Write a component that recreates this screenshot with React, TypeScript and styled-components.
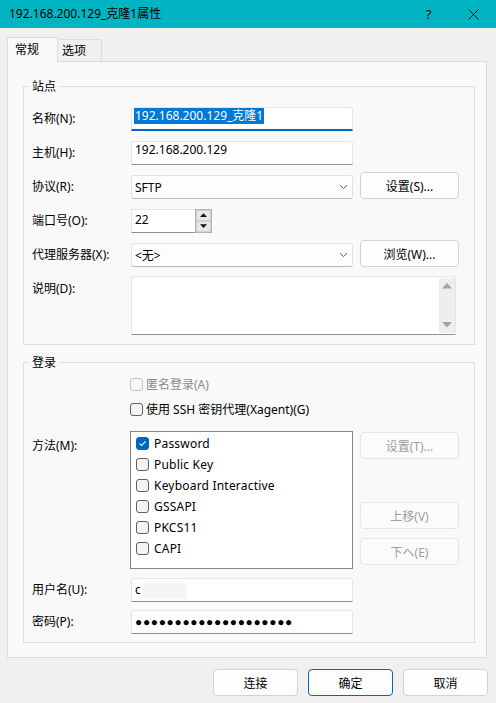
import React from 'react'
import styled, { createGlobalStyle } from 'styled-components'

const GlobalStyle = createGlobalStyle`
  html, body {
    margin: 0;
    padding: 0;
  }
  body {
    background: #f0f0f0;
    font-family: "Noto Sans", "Noto Sans CJK SC", sans-serif;
    font-size: 12px;
    color: #000;
  }
`

const methods: [string, boolean][] = [
  ['Password', true],
  ['Public Key', false],
  ['Keyboard Interactive', false],
  ['GSSAPI', false],
  ['PKCS11', false],
  ['CAPI', false],
]

function Chevron() {
  return (
    <svg width="9" height="6" viewBox="0 0 9 6">
      <path d="M1 1.2 L4.5 4.6 L8 1.2" fill="none" stroke="#5c5c5c" strokeWidth="1" />
    </svg>
  )
}

function Triangle({ down, color, size }: { down?: boolean, color: string, size: number }) {
  return (
    <svg width={size} height={size / 2 + 1} viewBox="0 0 10 6">
      {down
        ? <polygon points="0,0 10,0 5,5.5" fill={color} />
        : <polygon points="0,5.5 10,5.5 5,0" fill={color} />}
    </svg>
  )
}

function CheckBox({ checked, disabled }: { checked?: boolean, disabled?: boolean }) {
  return (
    <Box $checked={checked} $disabled={disabled}>
      {checked && (
        <svg width="11" height="11" viewBox="0 0 11 11">
          <path d="M2.6 5.6 L4.6 7.5 L8.4 3.4" fill="none" stroke="#fff" strokeWidth="1.1" />
        </svg>
      )}
    </Box>
  )
}

export default function App() {
  return (
    <>
      <GlobalStyle />
      <Window>
        <TitleBar>
          <Title>192.168.200.129_克隆1属性</Title>
          <CaptionButton>?</CaptionButton>
          <CaptionButton>
            <svg width="11" height="11" viewBox="0 0 11 11">
              <path d="M0.5 0.5 L10.5 10.5 M10.5 0.5 L0.5 10.5" stroke="#111" strokeWidth="1" />
            </svg>
          </CaptionButton>
        </TitleBar>

        <Content>
          <TabStrip>
            <Tab $active>常规</Tab>
            <Tab>选项</Tab>
          </TabStrip>

          <Panel>
            <Group $pt={17} $pb={9}>
              <Legend>站点</Legend>
              <Row $h={27}>
                <Label>名称(N):</Label>
                <Field $active $raise><Selected>192.168.200.129_克隆1</Selected></Field>
              </Row>
              <Row $h={27} $mt={7}>
                <Label>主机(H):</Label>
                <Field $raise>192.168.200.129</Field>
              </Row>
              <Row $h={27} $mt={7}>
                <Label>协议(R):</Label>
                <Select>SFTP<Chevron /></Select>
                <Button>设置(S)...</Button>
              </Row>
              <Row $h={27} $mt={7}>
                <Label>端口号(O):</Label>
                <Spin>
                  <SpinField>22</SpinField>
                  <SpinButtons>
                    <SpinButton><Triangle color="#111" size={7} /></SpinButton>
                    <SpinButton><Triangle down color="#111" size={7} /></SpinButton>
                  </SpinButtons>
                </Spin>
              </Row>
              <Row $h={27} $mt={7}>
                <Label>代理服务器(X):</Label>
                <Select>&lt;无&gt;<Chevron /></Select>
                <Button>浏览(W)...</Button>
              </Row>
              <Row $h={61} $mt={7} $align="start">
                <Label $pt={3}>说明(D):</Label>
                <TextArea>
                  <TextAreaBody />
                  <ScrollBar>
                    <Triangle color="#a3a3a3" size={10} />
                    <Triangle down color="#a3a3a3" size={10} />
                  </ScrollBar>
                </TextArea>
              </Row>
            </Group>

            <Group $mt={17} $pt={13} $pb={8}>
              <Legend>登录</Legend>
              <Row $h={17} $align="center">
                <CheckRow $disabled>
                  <CheckBox disabled />
                  匿名登录(A)
                </CheckRow>
              </Row>
              <Row $h={17} $mt={8} $align="center">
                <CheckRow>
                  <CheckBox />
                  使用 SSH 密钥代理(Xagent)(G)
                </CheckRow>
              </Row>
              <Row $h={138} $mt={13} $align="start">
                <Label $pt={3}>方法(M):</Label>
                <ListBox>
                  {methods.map(([name, checked]) => (
                    <ListItem key={name}>
                      <CheckBox checked={checked} />
                      {name}
                    </ListItem>
                  ))}
                </ListBox>
                <ButtonStack>
                  <Button disabled>设置(T)...</Button>
                  <Button disabled $mt={43}>上移(V)</Button>
                  <Button disabled $mt={9}>下へ(E)</Button>
                </ButtonStack>
              </Row>
              <Row $h={24} $mt={9}>
                <Label>用户名(U):</Label>
                <Field>c<Redacted /></Field>
              </Row>
              <Row $h={24} $mt={8}>
                <Label>密码(P):</Label>
                <Field><Dots>{'●'.repeat(20)}</Dots></Field>
              </Row>
            </Group>
          </Panel>

          <Footer>
            <DialogButton>连接</DialogButton>
            <DialogButton $default>确定</DialogButton>
            <DialogButton>取消</DialogButton>
          </Footer>
        </Content>
      </Window>
    </>
  )
}

const Window = styled.div`
  width: 496px;
  height: 703px;
  overflow: hidden;
  display: flex;
  flex-direction: column;
`

const TitleBar = styled.div`
  height: 28px;
  flex: none;
  display: flex;
  align-items: center;
  background: #00b4c4;
`

const Title = styled.div`
  flex: 1;
  padding-left: 9px;
  line-height: 28px;
`

const CaptionButton = styled.div`
  width: 45px;
  height: 28px;
  display: flex;
  align-items: center;
  justify-content: center;
  font-size: 13px;
`

const Content = styled.div`
  padding: 0 9px 0 7px;
`

const TabStrip = styled.div`
  margin-top: 9px;
  height: 24px;
  display: flex;
  align-items: flex-end;
`

const Tab = styled.div<{ $active?: boolean }>`
  box-sizing: border-box;
  position: relative;
  border: 1px solid #dcdcdc;
  border-bottom: none;
  ${({ $active }) => $active ? `
    z-index: 1;
    width: 51px;
    height: 25px;
    margin-bottom: -1px;
    padding-left: 7px;
    line-height: 23px;
    background: #f9f9f9;
  ` : `
    width: 44px;
    height: 22px;
    border-left: none;
    padding-left: 4px;
    line-height: 22px;
    background: #f0f0f0;
  `}
`

const Panel = styled.div`
  box-sizing: border-box;
  height: 597px;
  border: 1px solid #dcdcdc;
  background: #f9f9f9;
  padding: 24px 11px 0 15px;
`

const Group = styled.div<{ $mt?: number, $pt: number, $pb: number }>`
  position: relative;
  border: 1px solid #dcdcdc;
  margin-top: ${({ $mt }) => $mt ?? 0}px;
  padding: ${({ $pt }) => $pt}px 8px ${({ $pb }) => $pb}px;
`

const Legend = styled.div`
  position: absolute;
  top: -9px;
  left: 5px;
  padding: 0 3px;
  line-height: 17px;
  background: #f9f9f9;
`

const Row = styled.div<{ $h: number, $mt?: number, $align?: string }>`
  display: grid;
  grid-template-columns: 92px 222px 99px;
  column-gap: 7px;
  align-items: ${({ $align }) => $align ?? 'end'};
  height: ${({ $h }) => $h}px;
  margin-top: ${({ $mt }) => $mt ?? 0}px;
`

const Label = styled.div<{ $pt?: number }>`
  white-space: nowrap;
  line-height: 24px;
  height: 24px;
  padding-top: ${({ $pt }) => $pt ?? 0}px;
`

const Field = styled.div<{ $active?: boolean, $raise?: boolean }>`
  box-sizing: border-box;
  height: 24px;
  background: #fff;
  border: 1px solid #e5e5e5;
  border-bottom: ${({ $active }) => $active ? '2px solid #0067c0' : '1px solid #8e8e8e'};
  border-radius: 3px 3px 0 0;
  padding: 0 3px;
  line-height: ${({ $raise }) => $raise ? '16px' : '22px'};
  white-space: nowrap;
  overflow: hidden;
`

const Selected = styled.span`
  margin-left: -1px;
  padding: 0 1px;
  background: #0078d7;
  color: #fff;
`

const Select = styled.div`
  box-sizing: border-box;
  height: 24px;
  display: flex;
  align-items: center;
  justify-content: space-between;
  padding: 0 4px 0 3px;
  background: #fdfdfd;
  border: 1px solid #e2e2e2;
  border-bottom-color: #b8b8b8;
  border-radius: 3px;
`

const Button = styled.div<{ disabled?: boolean, $mt?: number }>`
  box-sizing: border-box;
  height: 27px;
  margin-top: ${({ $mt }) => $mt ?? 0}px;
  display: flex;
  align-items: center;
  justify-content: center;
  background: ${({ disabled }) => disabled ? '#fbfbfb' : '#fdfdfd'};
  border: 1px solid ${({ disabled }) => disabled ? '#e5e5e5' : '#d2d2d2'};
  border-radius: 4px;
  color: ${({ disabled }) => disabled ? '#9d9d9d' : '#000'};
`

const ButtonStack = styled.div`
  display: flex;
  flex-direction: column;
  padding-top: 1px;
`

const Spin = styled.div`
  width: 81px;
  height: 24px;
  display: flex;
`

const SpinField = styled.div`
  box-sizing: border-box;
  flex: 1;
  background: #fff;
  border: 1px solid #e5e5e5;
  border-bottom-color: #8e8e8e;
  border-right: none;
  padding: 0 3px;
  line-height: 19px;
`

const SpinButtons = styled.div`
  box-sizing: border-box;
  width: 17px;
  display: flex;
  flex-direction: column;
  border: 1px solid #b4b4b4;
`

const SpinButton = styled.div`
  flex: 1;
  display: flex;
  align-items: center;
  justify-content: center;
  background: #e8e8e8;
  border: 1px solid #cfcfcf;
`

const TextArea = styled.div`
  grid-column: 2 / 4;
  box-sizing: border-box;
  width: 325px;
  height: 59px;
  margin-top: 2px;
  display: flex;
  background: #fff;
  border: 1px solid #e5e5e5;
  border-bottom-color: #8e8e8e;
  border-radius: 3px 3px 0 0;
`

const TextAreaBody = styled.div`
  flex: 1;
`

const ScrollBar = styled.div`
  width: 16px;
  margin: 1px 0 1px;
  display: flex;
  flex-direction: column;
  align-items: center;
  justify-content: space-between;
  padding: 5px 0;
  background: #eeeeee;
`

const CheckRow = styled.div<{ $disabled?: boolean }>`
  grid-column: 2 / 4;
  margin-left: -1px;
  display: flex;
  align-items: center;
  gap: 3px;
  line-height: 17px;
  color: ${({ $disabled }) => $disabled ? '#8a8a8a' : '#000'};
  white-space: nowrap;
`

const Box = styled.span<{ $checked?: boolean, $disabled?: boolean }>`
  box-sizing: border-box;
  width: 13px;
  height: 13px;
  flex: none;
  display: inline-flex;
  align-items: center;
  justify-content: center;
  border-radius: 3px;
  border: 1px solid ${({ $checked, $disabled }) => $checked ? '#0067c0' : $disabled ? '#c4c4c4' : '#5f5f5f'};
  background: ${({ $checked, $disabled }) => $checked ? '#0067c0' : $disabled ? '#f7f7f7' : '#f4f4f4'};
`

const ListBox = styled.div`
  box-sizing: border-box;
  width: 223px;
  height: 138px;
  margin-left: -1px;
  padding: 1px 0 0 5px;
  background: #fff;
  border: 1px solid #868686;
`

const ListItem = styled.div`
  height: 21px;
  display: flex;
  align-items: center;
  gap: 5px;
  white-space: nowrap;
  letter-spacing: 0.2px;
`

const Redacted = styled.span`
  display: inline-block;
  width: 45px;
  height: 16px;
  margin-left: 1px;
  vertical-align: middle;
  background: #f5f5f5;
  filter: blur(1.5px);
`

const Dots = styled.span`
  font-family: "Liberation Sans", sans-serif;
  font-size: 12px;
  letter-spacing: 0.65px;
`

const Footer = styled.div`
  display: flex;
  justify-content: flex-end;
  gap: 10px;
  padding: 11px 0 0;
  margin-right: -1px;
`

const DialogButton = styled.div<{ $default?: boolean }>`
  box-sizing: border-box;
  width: 85px;
  height: 27px;
  display: flex;
  align-items: center;
  justify-content: center;
  background: #fdfdfd;
  border: 1px solid ${({ $default }) => $default ? '#0067c0' : '#d2d2d2'};
  border-radius: 4px;
`
